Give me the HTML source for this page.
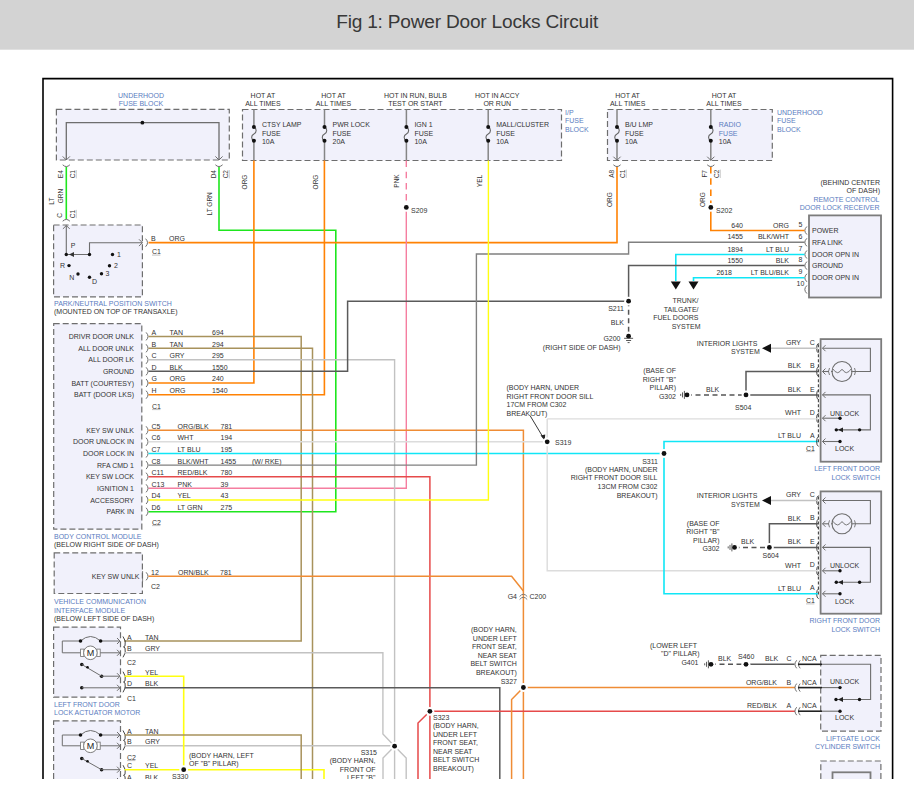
<!DOCTYPE html>
<html><head><meta charset="utf-8"><style>
html,body{margin:0;padding:0;background:#fff;width:914px;height:808px;overflow:hidden;}
svg{display:block;font-family:"Liberation Sans",sans-serif;}
</style></head><body>
<svg width="914" height="808" viewBox="0 0 914 808">
<rect x="0" y="0" width="914" height="49.7" fill="#d3d3d3"/>
<text x="336.2" y="28" text-anchor="start" fill="#383838" font-size="19.1" letter-spacing="-0.21">Fig 1: Power Door Locks Circuit</text>
<path d="M43,779 V78.6 H892.6 V779" fill="none" stroke="#000" stroke-width="1.6" />
<text x="141" y="98.4" text-anchor="middle" fill="#5a7cc0" font-size="7" >UNDERHOOD</text>
<text x="141" y="106.1" text-anchor="middle" fill="#5a7cc0" font-size="7" >FUSE BLOCK</text>
<rect x="56.4" y="109.4" width="172.9" height="50.599999999999994" fill="#f1f1fb" stroke="#6e6e6e" stroke-width="1.2" stroke-dasharray="6,3"/>
<path d="M66.3,160 V122.7 H219 V160" fill="none" stroke="#6e6e6e" stroke-width="1.3" />
<circle cx="142.4" cy="122.7" r="1.9" fill="#111"/>
<path d="M62.699999999999996,156.4 L66.3,160 L69.89999999999999,156.4" fill="none" stroke="#6e6e6e" stroke-width="1.0" />
<path d="M215.4,156.4 L219,160 L222.6,156.4" fill="none" stroke="#6e6e6e" stroke-width="1.0" />
<path d="M62.699999999999996,164.8 Q66.3,168.32 69.89999999999999,164.8" fill="none" stroke="#6e6e6e" stroke-width="1.0" />
<path d="M215.4,164.8 Q219,168.32 222.6,164.8" fill="none" stroke="#6e6e6e" stroke-width="1.0" />
<text transform="translate(63,174.2) rotate(-90)" text-anchor="middle" fill="#333333" font-size="6.5" >E4</text>
<text transform="translate(75,174.2) rotate(-90)" text-anchor="middle" fill="#333333" font-size="6.5" >C1</text>
<line x1="76.3" y1="170.0" x2="76.3" y2="178.39999999999998" stroke="#aaa" stroke-width="0.6" />
<text transform="translate(216,174.2) rotate(-90)" text-anchor="middle" fill="#333333" font-size="6.5" >D4</text>
<text transform="translate(228,174.2) rotate(-90)" text-anchor="middle" fill="#333333" font-size="6.5" >C2</text>
<line x1="229.3" y1="170.0" x2="229.3" y2="178.39999999999998" stroke="#aaa" stroke-width="0.6" />
<text transform="translate(53.8,201.2) rotate(-90)" text-anchor="middle" fill="#333333" font-size="6.5" >LT</text>
<text transform="translate(62.8,196) rotate(-90)" text-anchor="middle" fill="#333333" font-size="6.5" >GRN</text>
<text transform="translate(212,203.8) rotate(-90)" text-anchor="middle" fill="#333333" font-size="6.5" >LT GRN</text>
<text transform="translate(62,215.5) rotate(-90)" text-anchor="middle" fill="#333333" font-size="6.5" >C</text>
<text transform="translate(75,214) rotate(-90)" text-anchor="middle" fill="#333333" font-size="6.5" >C1</text>
<line x1="76.3" y1="209.8" x2="76.3" y2="218.2" stroke="#aaa" stroke-width="0.6" />
<path d="M66.3,167 V219" fill="none" stroke="#1ee61e" stroke-width="1.6" />
<path d="M219,167 V230.3 H335.8 V511.8 H148.5" fill="none" stroke="#1ee61e" stroke-width="1.6" />
<path d="M62.699999999999996,221.2 Q66.3,217.68 69.89999999999999,221.2" fill="none" stroke="#6e6e6e" stroke-width="1.0" />
<rect x="53.6" y="225" width="88.80000000000001" height="71.80000000000001" fill="#f1f1fb" stroke="#6e6e6e" stroke-width="1.2" stroke-dasharray="6,3"/>
<path d="M62.9,228.9 L66.3,225.5 L69.7,228.9" fill="none" stroke="#6e6e6e" stroke-width="1.0" />
<path d="M66.3,225.5 V254.5 H89.5 V242.7 H142.4" fill="none" stroke="#6e6e6e" stroke-width="1.1" />
<path d="M139.0,239.29999999999998 L142.4,242.7 L139.0,246.1" fill="none" stroke="#6e6e6e" stroke-width="1.0" />
<path d="M69,254.5 L74,252 L74,257 Z" fill="#333"/>
<path d="M145.6,238.7 Q149.44,242.7 145.6,246.7" fill="none" stroke="#6e6e6e" stroke-width="1.0" />
<circle cx="66.3" cy="254.5" r="1.7" fill="#111"/>
<circle cx="89.5" cy="254.5" r="1.7" fill="#111"/>
<circle cx="112.5" cy="254.5" r="1.7" fill="#111"/>
<circle cx="109.5" cy="265.7" r="1.7" fill="#111"/>
<circle cx="101.5" cy="273.8" r="1.7" fill="#111"/>
<circle cx="89.5" cy="277.2" r="1.7" fill="#111"/>
<circle cx="78" cy="274" r="1.7" fill="#111"/>
<circle cx="69" cy="265.6" r="1.7" fill="#111"/>
<text x="70.8" y="248" text-anchor="start" fill="#333333" font-size="7" >P</text>
<text x="117" y="257" text-anchor="start" fill="#333333" font-size="7" >1</text>
<text x="114" y="268" text-anchor="start" fill="#333333" font-size="7" >2</text>
<text x="105.5" y="276" text-anchor="start" fill="#333333" font-size="7" >3</text>
<text x="92" y="284.3" text-anchor="start" fill="#333333" font-size="7" >D</text>
<text x="69.3" y="280" text-anchor="start" fill="#333333" font-size="7" >N</text>
<text x="60" y="268" text-anchor="start" fill="#333333" font-size="7" >R</text>
<text x="151" y="240.5" text-anchor="start" fill="#333333" font-size="7" >B</text>
<text x="169" y="240.5" text-anchor="start" fill="#333333" font-size="7" >ORG</text>
<text x="152" y="254" text-anchor="start" fill="#333333" font-size="7" >C1</text>
<line x1="152" y1="255.1" x2="160.4" y2="255.1" stroke="#999" stroke-width="0.6"/>
<text x="54" y="305.5" text-anchor="start" fill="#5a7cc0" font-size="7" >PARK/NEUTRAL POSITION SWITCH</text>
<text x="54" y="314.2" text-anchor="start" fill="#333333" font-size="7" >(MOUNTED ON TOP OF TRANSAXLE)</text>
<path d="M148.5,242.6 H617 V167" fill="none" stroke="#ff8204" stroke-width="1.6" />
<rect x="242.5" y="109.5" width="319.0" height="51.0" fill="#f1f1fb" stroke="#6e6e6e" stroke-width="1.2" stroke-dasharray="6,3"/>
<line x1="253.9" y1="109.5" x2="253.9" y2="127" stroke="#858585" stroke-width="1.5" />
<line x1="253.9" y1="140.8" x2="253.9" y2="160.5" stroke="#858585" stroke-width="1.5" />
<path d="M253.9,127 C256.9,128.5 256.9,132.4 253.9,133.9 C250.9,135.4 250.9,139.3 253.9,140.8" fill="none" stroke="#666" stroke-width="1.1" />
<circle cx="253.9" cy="127" r="2.0" fill="#111"/>
<circle cx="253.9" cy="140.8" r="2.0" fill="#111"/>
<text x="261.9" y="126.6" text-anchor="start" fill="#333333" font-size="7" >CTSY LAMP</text>
<text x="261.9" y="135.8" text-anchor="start" fill="#333333" font-size="7" >FUSE</text>
<text x="261.9" y="144" text-anchor="start" fill="#333333" font-size="7" >10A</text>
<text x="262.9" y="98.2" text-anchor="middle" fill="#333333" font-size="7" >HOT AT</text>
<text x="262.9" y="105.8" text-anchor="middle" fill="#333333" font-size="7" >ALL TIMES</text>
<line x1="324.5" y1="109.5" x2="324.5" y2="127" stroke="#858585" stroke-width="1.5" />
<line x1="324.5" y1="140.8" x2="324.5" y2="160.5" stroke="#858585" stroke-width="1.5" />
<path d="M324.5,127 C327.5,128.5 327.5,132.4 324.5,133.9 C321.5,135.4 321.5,139.3 324.5,140.8" fill="none" stroke="#666" stroke-width="1.1" />
<circle cx="324.5" cy="127" r="2.0" fill="#111"/>
<circle cx="324.5" cy="140.8" r="2.0" fill="#111"/>
<text x="332.5" y="126.6" text-anchor="start" fill="#333333" font-size="7" >PWR LOCK</text>
<text x="332.5" y="135.8" text-anchor="start" fill="#333333" font-size="7" >FUSE</text>
<text x="332.5" y="144" text-anchor="start" fill="#333333" font-size="7" >20A</text>
<text x="333.5" y="98.2" text-anchor="middle" fill="#333333" font-size="7" >HOT AT</text>
<text x="333.5" y="105.8" text-anchor="middle" fill="#333333" font-size="7" >ALL TIMES</text>
<line x1="406.4" y1="109.5" x2="406.4" y2="127" stroke="#858585" stroke-width="1.5" />
<line x1="406.4" y1="140.8" x2="406.4" y2="160.5" stroke="#858585" stroke-width="1.5" />
<path d="M406.4,127 C409.4,128.5 409.4,132.4 406.4,133.9 C403.4,135.4 403.4,139.3 406.4,140.8" fill="none" stroke="#666" stroke-width="1.1" />
<circle cx="406.4" cy="127" r="2.0" fill="#111"/>
<circle cx="406.4" cy="140.8" r="2.0" fill="#111"/>
<text x="414.4" y="126.6" text-anchor="start" fill="#333333" font-size="7" >IGN 1</text>
<text x="414.4" y="135.8" text-anchor="start" fill="#333333" font-size="7" >FUSE</text>
<text x="414.4" y="144" text-anchor="start" fill="#333333" font-size="7" >10A</text>
<text x="415.4" y="98.2" text-anchor="middle" fill="#333333" font-size="7" >HOT IN RUN, BULB</text>
<text x="415.4" y="105.8" text-anchor="middle" fill="#333333" font-size="7" >TEST OR START</text>
<line x1="488.2" y1="109.5" x2="488.2" y2="127" stroke="#858585" stroke-width="1.5" />
<line x1="488.2" y1="140.8" x2="488.2" y2="160.5" stroke="#858585" stroke-width="1.5" />
<path d="M488.2,127 C491.2,128.5 491.2,132.4 488.2,133.9 C485.2,135.4 485.2,139.3 488.2,140.8" fill="none" stroke="#666" stroke-width="1.1" />
<circle cx="488.2" cy="127" r="2.0" fill="#111"/>
<circle cx="488.2" cy="140.8" r="2.0" fill="#111"/>
<text x="496.2" y="126.6" text-anchor="start" fill="#333333" font-size="7" >MALL/CLUSTER</text>
<text x="496.2" y="135.8" text-anchor="start" fill="#333333" font-size="7" >FUSE</text>
<text x="496.2" y="144" text-anchor="start" fill="#333333" font-size="7" >10A</text>
<text x="497.2" y="98.2" text-anchor="middle" fill="#333333" font-size="7" >HOT IN ACCY</text>
<text x="497.2" y="105.8" text-anchor="middle" fill="#333333" font-size="7" >OR RUN</text>
<text x="565" y="114.5" text-anchor="start" fill="#5a7cc0" font-size="7" >I/P</text>
<text x="565" y="123.2" text-anchor="start" fill="#5a7cc0" font-size="7" >FUSE</text>
<text x="565" y="132" text-anchor="start" fill="#5a7cc0" font-size="7" >BLOCK</text>
<text transform="translate(246.5,182) rotate(-90)" text-anchor="middle" fill="#333333" font-size="6.5" >ORG</text>
<text transform="translate(317.5,182) rotate(-90)" text-anchor="middle" fill="#333333" font-size="6.5" >ORG</text>
<text transform="translate(399,181) rotate(-90)" text-anchor="middle" fill="#333333" font-size="6.5" >PNK</text>
<text transform="translate(481.5,181) rotate(-90)" text-anchor="middle" fill="#333333" font-size="6.5" >YEL</text>
<path d="M253.9,160.5 V383 H148.5" fill="none" stroke="#ff8204" stroke-width="1.6" />
<path d="M324.4,160.5 V394.7 H148.5" fill="none" stroke="#ff8204" stroke-width="1.6" />
<path d="M406.3,160.5 V207.4" fill="none" stroke="#f57ea0" stroke-width="1.4" stroke-dasharray="6.5,4.7"/>
<path d="M406.3,207.4 V488.3 H148.5" fill="none" stroke="#f57ea0" stroke-width="1.4" />
<text x="411" y="212.5" text-anchor="start" fill="#333333" font-size="7" >S209</text>
<rect x="607.5" y="109.5" width="164.79999999999995" height="51.0" fill="#f1f1fb" stroke="#6e6e6e" stroke-width="1.2" stroke-dasharray="6,3"/>
<line x1="617" y1="109.5" x2="617" y2="127" stroke="#858585" stroke-width="1.5" />
<line x1="617" y1="140.8" x2="617" y2="160.5" stroke="#858585" stroke-width="1.5" />
<path d="M617,127 C620,128.5 620,132.4 617,133.9 C614,135.4 614,139.3 617,140.8" fill="none" stroke="#666" stroke-width="1.1" />
<circle cx="617" cy="127" r="2.0" fill="#111"/>
<circle cx="617" cy="140.8" r="2.0" fill="#111"/>
<text x="625" y="126.6" text-anchor="start" fill="#333333" font-size="7" >B/U LMP</text>
<text x="625" y="135.8" text-anchor="start" fill="#333333" font-size="7" >FUSE</text>
<text x="625" y="144" text-anchor="start" fill="#333333" font-size="7" >10A</text>
<text x="627.6" y="98.2" text-anchor="middle" fill="#333333" font-size="7" >HOT AT</text>
<text x="627.6" y="105.8" text-anchor="middle" fill="#333333" font-size="7" >ALL TIMES</text>
<path d="M613.4,156.70000000000002 L617,160.3 L620.6,156.70000000000002" fill="none" stroke="#6e6e6e" stroke-width="1.0" />
<path d="M613.4,164.8 Q617,168.32 620.6,164.8" fill="none" stroke="#6e6e6e" stroke-width="1.0" />
<line x1="710.8" y1="109.5" x2="710.8" y2="127" stroke="#858585" stroke-width="1.5" />
<line x1="710.8" y1="140.8" x2="710.8" y2="160.5" stroke="#858585" stroke-width="1.5" />
<path d="M710.8,127 C713.8,128.5 713.8,132.4 710.8,133.9 C707.8,135.4 707.8,139.3 710.8,140.8" fill="none" stroke="#666" stroke-width="1.1" />
<circle cx="710.8" cy="127" r="2.0" fill="#111"/>
<circle cx="710.8" cy="140.8" r="2.0" fill="#111"/>
<text x="718.8" y="126.6" text-anchor="start" fill="#5a7cc0" font-size="7" >RADIO</text>
<text x="718.8" y="135.8" text-anchor="start" fill="#5a7cc0" font-size="7" >FUSE</text>
<text x="718.8" y="144" text-anchor="start" fill="#333333" font-size="7" >10A</text>
<text x="724" y="98.2" text-anchor="middle" fill="#333333" font-size="7" >HOT AT</text>
<text x="724" y="105.8" text-anchor="middle" fill="#333333" font-size="7" >ALL TIMES</text>
<path d="M707.1999999999999,156.70000000000002 L710.8,160.3 L714.4,156.70000000000002" fill="none" stroke="#6e6e6e" stroke-width="1.0" />
<path d="M707.1999999999999,164.8 Q710.8,168.32 714.4,164.8" fill="none" stroke="#6e6e6e" stroke-width="1.0" />
<text x="777" y="114.5" text-anchor="start" fill="#5a7cc0" font-size="7" >UNDERHOOD</text>
<text x="777" y="123.2" text-anchor="start" fill="#5a7cc0" font-size="7" >FUSE</text>
<text x="777" y="131.9" text-anchor="start" fill="#5a7cc0" font-size="7" >BLOCK</text>
<text transform="translate(613.5,173.8) rotate(-90)" text-anchor="middle" fill="#333333" font-size="6.5" >A8</text>
<text transform="translate(625,173.8) rotate(-90)" text-anchor="middle" fill="#333333" font-size="6.5" >C1</text>
<line x1="626.3" y1="169.60000000000002" x2="626.3" y2="178.0" stroke="#aaa" stroke-width="0.6" />
<text transform="translate(707.3,173.8) rotate(-90)" text-anchor="middle" fill="#333333" font-size="6.5" >F7</text>
<text transform="translate(719,173.8) rotate(-90)" text-anchor="middle" fill="#333333" font-size="6.5" >C2</text>
<line x1="720.3" y1="169.60000000000002" x2="720.3" y2="178.0" stroke="#aaa" stroke-width="0.6" />
<text transform="translate(611.5,199.7) rotate(-90)" text-anchor="middle" fill="#333333" font-size="6.5" >ORG</text>
<text transform="translate(705,199.7) rotate(-90)" text-anchor="middle" fill="#333333" font-size="6.5" >ORG</text>
<path d="M710.8,167 V207.4" fill="none" stroke="#ff8204" stroke-width="1.6" stroke-dasharray="6.5,4.7"/>
<text x="716" y="212.5" text-anchor="start" fill="#333333" font-size="7" >S202</text>
<rect x="53.7" y="323.7" width="88.10000000000001" height="205.50000000000006" fill="#f1f1fb" stroke="#6e6e6e" stroke-width="1.2" stroke-dasharray="6,3"/>
<path d="M146.1,332.4 Q149.94,336.4 146.1,340.4" fill="none" stroke="#6e6e6e" stroke-width="1.0" />
<text x="151.5" y="334.79999999999995" text-anchor="start" fill="#333333" font-size="7" >A</text>
<text x="169.5" y="334.79999999999995" text-anchor="start" fill="#333333" font-size="7" >TAN</text>
<text x="212" y="334.79999999999995" text-anchor="start" fill="#333333" font-size="7" >694</text>
<text x="134" y="339.0" text-anchor="end" fill="#333333" font-size="7" >DRIVR DOOR UNLK</text>
<path d="M146.1,344.3 Q149.94,348.3 146.1,352.3" fill="none" stroke="#6e6e6e" stroke-width="1.0" />
<text x="151.5" y="346.7" text-anchor="start" fill="#333333" font-size="7" >B</text>
<text x="169.5" y="346.7" text-anchor="start" fill="#333333" font-size="7" >TAN</text>
<text x="212" y="346.7" text-anchor="start" fill="#333333" font-size="7" >294</text>
<text x="134" y="350.90000000000003" text-anchor="end" fill="#333333" font-size="7" >ALL DOOR UNLK</text>
<path d="M146.1,355.8 Q149.94,359.8 146.1,363.8" fill="none" stroke="#6e6e6e" stroke-width="1.0" />
<text x="151.5" y="358.2" text-anchor="start" fill="#333333" font-size="7" >C</text>
<text x="169.5" y="358.2" text-anchor="start" fill="#333333" font-size="7" >GRY</text>
<text x="212" y="358.2" text-anchor="start" fill="#333333" font-size="7" >295</text>
<text x="134" y="362.40000000000003" text-anchor="end" fill="#333333" font-size="7" >ALL DOOR LK</text>
<path d="M146.1,367.3 Q149.94,371.3 146.1,375.3" fill="none" stroke="#6e6e6e" stroke-width="1.0" />
<text x="151.5" y="369.7" text-anchor="start" fill="#333333" font-size="7" >D</text>
<text x="169.5" y="369.7" text-anchor="start" fill="#333333" font-size="7" >BLK</text>
<text x="212" y="369.7" text-anchor="start" fill="#333333" font-size="7" >1550</text>
<text x="134" y="373.90000000000003" text-anchor="end" fill="#333333" font-size="7" >GROUND</text>
<path d="M146.1,379.0 Q149.94,383.0 146.1,387.0" fill="none" stroke="#6e6e6e" stroke-width="1.0" />
<text x="151.5" y="381.4" text-anchor="start" fill="#333333" font-size="7" >G</text>
<text x="169.5" y="381.4" text-anchor="start" fill="#333333" font-size="7" >ORG</text>
<text x="212" y="381.4" text-anchor="start" fill="#333333" font-size="7" >240</text>
<text x="134" y="385.6" text-anchor="end" fill="#333333" font-size="7" >BATT (COURTESY)</text>
<path d="M146.1,390.7 Q149.94,394.7 146.1,398.7" fill="none" stroke="#6e6e6e" stroke-width="1.0" />
<text x="151.5" y="393.09999999999997" text-anchor="start" fill="#333333" font-size="7" >H</text>
<text x="169.5" y="393.09999999999997" text-anchor="start" fill="#333333" font-size="7" >ORG</text>
<text x="212" y="393.09999999999997" text-anchor="start" fill="#333333" font-size="7" >1540</text>
<text x="134" y="397.3" text-anchor="end" fill="#333333" font-size="7" >BATT (DOOR LKS)</text>
<text x="152" y="408.5" text-anchor="start" fill="#333333" font-size="7" >C1</text>
<line x1="152" y1="409.6" x2="160.4" y2="409.6" stroke="#999" stroke-width="0.6"/>
<path d="M146.1,426.3 Q149.94,430.3 146.1,434.3" fill="none" stroke="#6e6e6e" stroke-width="1.0" />
<text x="151.5" y="428.7" text-anchor="start" fill="#333333" font-size="7" >C5</text>
<text x="177.5" y="428.7" text-anchor="start" fill="#333333" font-size="7" >ORG/BLK</text>
<text x="220.5" y="428.7" text-anchor="start" fill="#333333" font-size="7" >781</text>
<text x="134" y="432.90000000000003" text-anchor="end" fill="#333333" font-size="7" >KEY SW UNLK</text>
<path d="M146.1,437.8 Q149.94,441.8 146.1,445.8" fill="none" stroke="#6e6e6e" stroke-width="1.0" />
<text x="151.5" y="440.2" text-anchor="start" fill="#333333" font-size="7" >C6</text>
<text x="177.5" y="440.2" text-anchor="start" fill="#333333" font-size="7" >WHT</text>
<text x="220.5" y="440.2" text-anchor="start" fill="#333333" font-size="7" >194</text>
<text x="134" y="444.40000000000003" text-anchor="end" fill="#333333" font-size="7" >DOOR UNLOCK IN</text>
<path d="M146.1,449.5 Q149.94,453.5 146.1,457.5" fill="none" stroke="#6e6e6e" stroke-width="1.0" />
<text x="151.5" y="451.9" text-anchor="start" fill="#333333" font-size="7" >C7</text>
<text x="177.5" y="451.9" text-anchor="start" fill="#333333" font-size="7" >LT BLU</text>
<text x="220.5" y="451.9" text-anchor="start" fill="#333333" font-size="7" >195</text>
<text x="134" y="456.1" text-anchor="end" fill="#333333" font-size="7" >DOOR LOCK IN</text>
<path d="M146.1,461.1 Q149.94,465.1 146.1,469.1" fill="none" stroke="#6e6e6e" stroke-width="1.0" />
<text x="151.5" y="463.5" text-anchor="start" fill="#333333" font-size="7" >C8</text>
<text x="177.5" y="463.5" text-anchor="start" fill="#333333" font-size="7" >BLK/WHT</text>
<text x="220.5" y="463.5" text-anchor="start" fill="#333333" font-size="7" >1455</text>
<text x="134" y="467.70000000000005" text-anchor="end" fill="#333333" font-size="7" >RFA CMD 1</text>
<path d="M146.1,472.7 Q149.94,476.7 146.1,480.7" fill="none" stroke="#6e6e6e" stroke-width="1.0" />
<text x="151.5" y="475.09999999999997" text-anchor="start" fill="#333333" font-size="7" >C11</text>
<text x="177.5" y="475.09999999999997" text-anchor="start" fill="#333333" font-size="7" >RED/BLK</text>
<text x="220.5" y="475.09999999999997" text-anchor="start" fill="#333333" font-size="7" >780</text>
<text x="134" y="479.3" text-anchor="end" fill="#333333" font-size="7" >KEY SW LOCK</text>
<path d="M146.1,484.3 Q149.94,488.3 146.1,492.3" fill="none" stroke="#6e6e6e" stroke-width="1.0" />
<text x="151.5" y="486.7" text-anchor="start" fill="#333333" font-size="7" >C13</text>
<text x="177.5" y="486.7" text-anchor="start" fill="#333333" font-size="7" >PNK</text>
<text x="220.5" y="486.7" text-anchor="start" fill="#333333" font-size="7" >39</text>
<text x="134" y="490.90000000000003" text-anchor="end" fill="#333333" font-size="7" >IGNITION 1</text>
<path d="M146.1,496.0 Q149.94,500.0 146.1,504.0" fill="none" stroke="#6e6e6e" stroke-width="1.0" />
<text x="151.5" y="498.4" text-anchor="start" fill="#333333" font-size="7" >D4</text>
<text x="177.5" y="498.4" text-anchor="start" fill="#333333" font-size="7" >YEL</text>
<text x="220.5" y="498.4" text-anchor="start" fill="#333333" font-size="7" >43</text>
<text x="134" y="502.6" text-anchor="end" fill="#333333" font-size="7" >ACCESSORY</text>
<path d="M146.1,507.8 Q149.94,511.8 146.1,515.8" fill="none" stroke="#6e6e6e" stroke-width="1.0" />
<text x="151.5" y="510.2" text-anchor="start" fill="#333333" font-size="7" >D6</text>
<text x="177.5" y="510.2" text-anchor="start" fill="#333333" font-size="7" >LT GRN</text>
<text x="220.5" y="510.2" text-anchor="start" fill="#333333" font-size="7" >275</text>
<text x="134" y="514.4" text-anchor="end" fill="#333333" font-size="7" >PARK IN</text>
<text x="252" y="463.5" text-anchor="start" fill="#333333" font-size="7" >(W/ RKE)</text>
<text x="152" y="524.5" text-anchor="start" fill="#333333" font-size="7" >C2</text>
<line x1="152" y1="525.6" x2="160.4" y2="525.6" stroke="#999" stroke-width="0.6"/>
<text x="54" y="539" text-anchor="start" fill="#5a7cc0" font-size="7" >BODY CONTROL MODULE</text>
<text x="54" y="547.2" text-anchor="start" fill="#333333" font-size="7" >(BELOW RIGHT SIDE OF DASH)</text>
<path d="M148.5,336.4 H301.2 V641 H124" fill="none" stroke="#a8925c" stroke-width="1.5" />
<path d="M148.5,348.3 H312.5 V779" fill="none" stroke="#a8925c" stroke-width="1.5" />
<path d="M148.5,359.8 H394.6 V779" fill="none" stroke="#c2c2c2" stroke-width="1.4" />
<path d="M148.5,371.3 H347.6 V301.2 H628.6" fill="none" stroke="#5a5a5a" stroke-width="1.5" />
<path d="M148.5,430.3 H523.4 V779" fill="none" stroke="#ef8c35" stroke-width="1.5" />
<path d="M148.5,441.8 H547.2" fill="none" stroke="#dcdcdc" stroke-width="1.4" />
<path d="M148.5,453.5 H664 V441.5 H818" fill="none" stroke="#10e6f6" stroke-width="1.6" />
<path d="M148.5,465.1 H476.4 V254 H628.6 V242.3 H804.5" fill="none" stroke="#808080" stroke-width="1.4" />
<path d="M148.5,476.7 H429.9 V779" fill="none" stroke="#e64a4a" stroke-width="1.5" />
<text x="880" y="184.8" text-anchor="end" fill="#333333" font-size="7" >(BEHIND CENTER</text>
<text x="880" y="192.9" text-anchor="end" fill="#333333" font-size="7" >OF DASH)</text>
<text x="879.5" y="201.5" text-anchor="end" fill="#5a7cc0" font-size="7" >REMOTE CONTROL</text>
<text x="879.5" y="209.5" text-anchor="end" fill="#5a7cc0" font-size="7" >DOOR LOCK RECEIVER</text>
<rect x="809" y="215.4" width="72" height="82.1" fill="#f1f1fb" stroke="#7c7c7c" stroke-width="1.8"/>
<path d="M806.9,226.5 Q802.74,230.5 806.9,234.5" fill="none" stroke="#6e6e6e" stroke-width="1.0" />
<text x="800.5" y="226.7" text-anchor="middle" fill="#333333" font-size="7" >5</text>
<text x="812" y="233.1" text-anchor="start" fill="#333333" font-size="7" >POWER</text>
<text x="743" y="227.6" text-anchor="end" fill="#333333" font-size="7" >640</text>
<text x="789" y="227.6" text-anchor="end" fill="#333333" font-size="7" >ORG</text>
<path d="M806.9,238.3 Q802.74,242.3 806.9,246.3" fill="none" stroke="#6e6e6e" stroke-width="1.0" />
<text x="800.5" y="238.5" text-anchor="middle" fill="#333333" font-size="7" >6</text>
<text x="812" y="244.9" text-anchor="start" fill="#333333" font-size="7" >RFA LINK</text>
<text x="743" y="239.4" text-anchor="end" fill="#333333" font-size="7" >1455</text>
<text x="789" y="239.4" text-anchor="end" fill="#333333" font-size="7" >BLK/WHT</text>
<path d="M806.9,250.5 Q802.74,254.5 806.9,258.5" fill="none" stroke="#6e6e6e" stroke-width="1.0" />
<text x="800.5" y="250.7" text-anchor="middle" fill="#333333" font-size="7" >7</text>
<text x="812" y="257.1" text-anchor="start" fill="#333333" font-size="7" >DOOR OPN IN</text>
<text x="743" y="251.6" text-anchor="end" fill="#333333" font-size="7" >1894</text>
<text x="789" y="251.6" text-anchor="end" fill="#333333" font-size="7" >LT BLU</text>
<path d="M806.9,261.6 Q802.74,265.6 806.9,269.6" fill="none" stroke="#6e6e6e" stroke-width="1.0" />
<text x="800.5" y="261.8" text-anchor="middle" fill="#333333" font-size="7" >8</text>
<text x="812" y="268.20000000000005" text-anchor="start" fill="#333333" font-size="7" >GROUND</text>
<text x="743" y="262.70000000000005" text-anchor="end" fill="#333333" font-size="7" >1550</text>
<text x="789" y="262.70000000000005" text-anchor="end" fill="#333333" font-size="7" >BLK</text>
<path d="M806.9,273.8 Q802.74,277.8 806.9,281.8" fill="none" stroke="#6e6e6e" stroke-width="1.0" />
<text x="800.5" y="274.0" text-anchor="middle" fill="#333333" font-size="7" >9</text>
<text x="812" y="280.40000000000003" text-anchor="start" fill="#333333" font-size="7" >DOOR OPN IN</text>
<text x="732" y="274.90000000000003" text-anchor="end" fill="#333333" font-size="7" >2618</text>
<text x="789" y="274.90000000000003" text-anchor="end" fill="#333333" font-size="7" >LT BLU/BLK</text>
<path d="M806.9,285.5 Q802.74,289.5 806.9,293.5" fill="none" stroke="#6e6e6e" stroke-width="1.0" />
<text x="800.5" y="285.7" text-anchor="middle" fill="#333333" font-size="7" >10</text>
<path d="M710.8,207.4 V230.5 H804.5" fill="none" stroke="#ff8204" stroke-width="1.6" />
<path d="M804.5,254.5 H675.8 V281" fill="none" stroke="#10e6f6" stroke-width="1.6" />
<path d="M804.5,277.8 H693.5 V281" fill="none" stroke="#10e6f6" stroke-width="1.6" />
<path d="M670.8,281.5 H680.8 L675.8,289.5 Z" fill="#111"/>
<path d="M688.5,281.5 H698.5 L693.5,289.5 Z" fill="#111"/>
<path d="M804.5,265.6 H628.6 V301.2" fill="none" stroke="#5a5a5a" stroke-width="1.5" />
<text x="698.5" y="302.8" text-anchor="end" fill="#333333" font-size="7" >TRUNK/</text>
<text x="698.5" y="311.5" text-anchor="end" fill="#333333" font-size="7" >TAILGATE/</text>
<text x="698.5" y="320.2" text-anchor="end" fill="#333333" font-size="7" >FUEL DOORS</text>
<text x="700.5" y="329" text-anchor="end" fill="#333333" font-size="7" >SYSTEM</text>
<path d="M628.6,301.2 V336" fill="none" stroke="#555" stroke-width="1.5" stroke-dasharray="5,3.5"/>
<text x="624" y="311" text-anchor="end" fill="#333333" font-size="7" >S211</text>
<text x="624" y="325" text-anchor="end" fill="#333333" font-size="7" >BLK</text>
<text x="620.5" y="341" text-anchor="end" fill="#333333" font-size="7" >G200</text>
<text x="620.5" y="349.5" text-anchor="end" fill="#333333" font-size="7" >(RIGHT SIDE OF DASH)</text>
<rect x="820.6" y="339.1" width="60.60000000000002" height="122.59999999999997" fill="#f1f1fb" stroke="#7c7c7c" stroke-width="1.8"/>
<line x1="818.4" y1="344.2" x2="818.4" y2="442.5" stroke="#444" stroke-width="1.1" stroke-dasharray="3,2"/>
<path d="M818.6,343.2 Q816.6,344.2 816.6,348.2 Q816.6,352.2 818.6,353.2" fill="none" stroke="#333" stroke-width="0.9" />
<path d="M825.5,345.2 L822.5,348.2 L825.5,351.2" fill="none" stroke="#6e6e6e" stroke-width="1.0" />
<path d="M818.6,366.5 Q816.6,367.5 816.6,371.5 Q816.6,375.5 818.6,376.5" fill="none" stroke="#333" stroke-width="0.9" />
<path d="M825.5,368.5 L822.5,371.5 L825.5,374.5" fill="none" stroke="#6e6e6e" stroke-width="1.0" />
<path d="M818.6,389.9 Q816.6,390.9 816.6,394.9 Q816.6,398.9 818.6,399.9" fill="none" stroke="#333" stroke-width="0.9" />
<path d="M825.5,391.9 L822.5,394.9 L825.5,397.9" fill="none" stroke="#6e6e6e" stroke-width="1.0" />
<path d="M818.6,413.2 Q816.6,414.2 816.6,418.2 Q816.6,422.2 818.6,423.2" fill="none" stroke="#333" stroke-width="0.9" />
<path d="M825.5,415.2 L822.5,418.2 L825.5,421.2" fill="none" stroke="#6e6e6e" stroke-width="1.0" />
<path d="M818.6,436.5 Q816.6,437.5 816.6,441.5 Q816.6,445.5 818.6,446.5" fill="none" stroke="#333" stroke-width="0.9" />
<path d="M825.5,438.5 L822.5,441.5 L825.5,444.5" fill="none" stroke="#6e6e6e" stroke-width="1.0" />
<path d="M822.5,348.2 H870.4 V371.5 H853" fill="none" stroke="#6e6e6e" stroke-width="1.1" />
<path d="M822.5,371.5 H829" fill="none" stroke="#6e6e6e" stroke-width="1.1" />
<circle cx="842" cy="371.5" r="10" fill="none" stroke="#6e6e6e" stroke-width="1.1"/>
<path d="M829.5,368.0 Q827.5,371.5 829.5,375.0 M854.5,368.0 Q856.5,371.5 854.5,375.0" fill="none" stroke="#6e6e6e" stroke-width="0.9" />
<path d="M833,369.0 L835,371.5 Q838,374.0 840,371.5 Q842,367.5 844,371.5 Q846,374.0 849,371.5 L851,369.0" fill="none" stroke="#6e6e6e" stroke-width="0.9" />
<path d="M831,371.5 H833 M851,371.5 H853" fill="none" stroke="#6e6e6e" stroke-width="0.9" />
<path d="M822.5,394.9 H870.4 V429.85 H836.3" fill="none" stroke="#6e6e6e" stroke-width="1.1" />
<path d="M838,429.85 L843,427.45000000000005 L843,432.25 Z" fill="#222"/>
<circle cx="836.3" cy="429.85" r="1.7" fill="#111"/>
<circle cx="859.6" cy="429.85" r="1.7" fill="#111"/>
<path d="M822.5,418.2 H840" fill="none" stroke="#6e6e6e" stroke-width="1.1" />
<circle cx="840" cy="418.2" r="1.7" fill="#111"/>
<path d="M822.5,441.5 H840" fill="none" stroke="#6e6e6e" stroke-width="1.1" />
<circle cx="840" cy="441.5" r="1.7" fill="#111"/>
<text x="830" y="415.8" text-anchor="start" fill="#333333" font-size="7" >UNLOCK</text>
<text x="835" y="451.3" text-anchor="start" fill="#333333" font-size="7" >LOCK</text>
<text x="812.3" y="344.8" text-anchor="middle" fill="#333333" font-size="7" >C</text>
<text x="801" y="345.0" text-anchor="end" fill="#333333" font-size="7" >GRY</text>
<text x="812.3" y="368.1" text-anchor="middle" fill="#333333" font-size="7" >B</text>
<text x="801" y="368.3" text-anchor="end" fill="#333333" font-size="7" >BLK</text>
<text x="812.3" y="391.5" text-anchor="middle" fill="#333333" font-size="7" >E</text>
<text x="801" y="391.7" text-anchor="end" fill="#333333" font-size="7" >BLK</text>
<text x="812.3" y="414.8" text-anchor="middle" fill="#333333" font-size="7" >D</text>
<text x="801" y="415.0" text-anchor="end" fill="#333333" font-size="7" >WHT</text>
<text x="812.3" y="438.1" text-anchor="middle" fill="#333333" font-size="7" >A</text>
<text x="801" y="438.3" text-anchor="end" fill="#333333" font-size="7" >LT BLU</text>
<text x="806" y="450.5" text-anchor="start" fill="#333333" font-size="7" >C1</text>
<line x1="806" y1="451.6" x2="814.4" y2="451.6" stroke="#999" stroke-width="0.6"/>
<text x="880" y="471.2" text-anchor="end" fill="#5a7cc0" font-size="7" >LEFT FRONT DOOR</text>
<text x="880" y="479.9" text-anchor="end" fill="#5a7cc0" font-size="7" >LOCK SWITCH</text>
<text x="757.5" y="345.59999999999997" text-anchor="end" fill="#333333" font-size="7" >INTERIOR LIGHTS</text>
<text x="759.8" y="354.4" text-anchor="end" fill="#333333" font-size="7" >SYSTEM</text>
<path d="M762,348.2 L771,343.7 L771,352.7 Z" fill="#111"/>
<path d="M771,348.2 H818" fill="none" stroke="#c2c2c2" stroke-width="1.4" />
<path d="M746,394.9 V371.5 H818" fill="none" stroke="#5a5a5a" stroke-width="1.5" />
<path d="M746,394.9 H818" fill="none" stroke="#5a5a5a" stroke-width="1.5" />
<path d="M687,394.9 H746" fill="none" stroke="#555" stroke-width="1.5" stroke-dasharray="5,3.5"/>
<text x="676" y="373.4" text-anchor="end" fill="#333333" font-size="7" >(BASE OF</text>
<text x="676" y="381.9" text-anchor="end" fill="#333333" font-size="7" >RIGHT &quot;B&quot;</text>
<text x="676" y="390.4" text-anchor="end" fill="#333333" font-size="7" >PILLAR)</text>
<text x="676" y="398.9" text-anchor="end" fill="#333333" font-size="7" >G302</text>
<text x="706" y="391.5" text-anchor="start" fill="#333333" font-size="7" >BLK</text>
<text x="735" y="409.5" text-anchor="start" fill="#333333" font-size="7" >S504</text>
<rect x="820.6" y="491.4" width="60.60000000000002" height="122.30000000000007" fill="#f1f1fb" stroke="#7c7c7c" stroke-width="1.8"/>
<line x1="818.4" y1="496.5" x2="818.4" y2="594.8" stroke="#444" stroke-width="1.1" stroke-dasharray="3,2"/>
<path d="M818.6,495.5 Q816.6,496.5 816.6,500.5 Q816.6,504.5 818.6,505.5" fill="none" stroke="#333" stroke-width="0.9" />
<path d="M825.5,497.5 L822.5,500.5 L825.5,503.5" fill="none" stroke="#6e6e6e" stroke-width="1.0" />
<path d="M818.6,518.8 Q816.6,519.8 816.6,523.8 Q816.6,527.8 818.6,528.8" fill="none" stroke="#333" stroke-width="0.9" />
<path d="M825.5,520.8 L822.5,523.8 L825.5,526.8" fill="none" stroke="#6e6e6e" stroke-width="1.0" />
<path d="M818.6,542.4 Q816.6,543.4 816.6,547.4 Q816.6,551.4 818.6,552.4" fill="none" stroke="#333" stroke-width="0.9" />
<path d="M825.5,544.4 L822.5,547.4 L825.5,550.4" fill="none" stroke="#6e6e6e" stroke-width="1.0" />
<path d="M818.6,565.8 Q816.6,566.8 816.6,570.8 Q816.6,574.8 818.6,575.8" fill="none" stroke="#333" stroke-width="0.9" />
<path d="M825.5,567.8 L822.5,570.8 L825.5,573.8" fill="none" stroke="#6e6e6e" stroke-width="1.0" />
<path d="M818.6,588.8 Q816.6,589.8 816.6,593.8 Q816.6,597.8 818.6,598.8" fill="none" stroke="#333" stroke-width="0.9" />
<path d="M825.5,590.8 L822.5,593.8 L825.5,596.8" fill="none" stroke="#6e6e6e" stroke-width="1.0" />
<path d="M822.5,500.5 H870.4 V523.8 H853" fill="none" stroke="#6e6e6e" stroke-width="1.1" />
<path d="M822.5,523.8 H829" fill="none" stroke="#6e6e6e" stroke-width="1.1" />
<circle cx="842" cy="523.8" r="10" fill="none" stroke="#6e6e6e" stroke-width="1.1"/>
<path d="M829.5,520.3 Q827.5,523.8 829.5,527.3 M854.5,520.3 Q856.5,523.8 854.5,527.3" fill="none" stroke="#6e6e6e" stroke-width="0.9" />
<path d="M833,521.3 L835,523.8 Q838,526.3 840,523.8 Q842,519.8 844,523.8 Q846,526.3 849,523.8 L851,521.3" fill="none" stroke="#6e6e6e" stroke-width="0.9" />
<path d="M831,523.8 H833 M851,523.8 H853" fill="none" stroke="#6e6e6e" stroke-width="0.9" />
<path d="M822.5,547.4 H870.4 V582.3 H836.3" fill="none" stroke="#6e6e6e" stroke-width="1.1" />
<path d="M838,582.3 L843,579.9 L843,584.6999999999999 Z" fill="#222"/>
<circle cx="836.3" cy="582.3" r="1.7" fill="#111"/>
<circle cx="859.6" cy="582.3" r="1.7" fill="#111"/>
<path d="M822.5,570.8 H840" fill="none" stroke="#6e6e6e" stroke-width="1.1" />
<circle cx="840" cy="570.8" r="1.7" fill="#111"/>
<path d="M822.5,593.8 H840" fill="none" stroke="#6e6e6e" stroke-width="1.1" />
<circle cx="840" cy="593.8" r="1.7" fill="#111"/>
<text x="830" y="568.4" text-anchor="start" fill="#333333" font-size="7" >UNLOCK</text>
<text x="835" y="603.5999999999999" text-anchor="start" fill="#333333" font-size="7" >LOCK</text>
<text x="812.3" y="497.1" text-anchor="middle" fill="#333333" font-size="7" >C</text>
<text x="801" y="497.3" text-anchor="end" fill="#333333" font-size="7" >GRY</text>
<text x="812.3" y="520.4" text-anchor="middle" fill="#333333" font-size="7" >B</text>
<text x="801" y="520.5999999999999" text-anchor="end" fill="#333333" font-size="7" >BLK</text>
<text x="812.3" y="544.0" text-anchor="middle" fill="#333333" font-size="7" >E</text>
<text x="801" y="544.1999999999999" text-anchor="end" fill="#333333" font-size="7" >BLK</text>
<text x="812.3" y="567.4" text-anchor="middle" fill="#333333" font-size="7" >D</text>
<text x="801" y="567.5999999999999" text-anchor="end" fill="#333333" font-size="7" >WHT</text>
<text x="812.3" y="590.4" text-anchor="middle" fill="#333333" font-size="7" >A</text>
<text x="801" y="590.5999999999999" text-anchor="end" fill="#333333" font-size="7" >LT BLU</text>
<text x="806" y="602.8" text-anchor="start" fill="#333333" font-size="7" >C1</text>
<line x1="806" y1="603.9" x2="814.4" y2="603.9" stroke="#999" stroke-width="0.6"/>
<text x="880" y="623.2" text-anchor="end" fill="#5a7cc0" font-size="7" >RIGHT FRONT DOOR</text>
<text x="880" y="631.9" text-anchor="end" fill="#5a7cc0" font-size="7" >LOCK SWITCH</text>
<text x="757.5" y="497.9" text-anchor="end" fill="#333333" font-size="7" >INTERIOR LIGHTS</text>
<text x="759.8" y="506.7" text-anchor="end" fill="#333333" font-size="7" >SYSTEM</text>
<path d="M762,500.5 L771,496.0 L771,505.0 Z" fill="#111"/>
<path d="M771,500.5 H818" fill="none" stroke="#c2c2c2" stroke-width="1.4" />
<path d="M769.4,547.4 V523.8 H818" fill="none" stroke="#5a5a5a" stroke-width="1.5" />
<path d="M769.4,547.4 H818" fill="none" stroke="#5a5a5a" stroke-width="1.5" />
<path d="M734.5,547.4 H769.4" fill="none" stroke="#555" stroke-width="1.5" stroke-dasharray="5,3.5"/>
<text x="719.5" y="525.9" text-anchor="end" fill="#333333" font-size="7" >(BASE OF</text>
<text x="719.5" y="534.4" text-anchor="end" fill="#333333" font-size="7" >RIGHT &quot;B&quot;</text>
<text x="719.5" y="542.9" text-anchor="end" fill="#333333" font-size="7" >PILLAR)</text>
<text x="719.5" y="551.4" text-anchor="end" fill="#333333" font-size="7" >G302</text>
<text x="741" y="544" text-anchor="start" fill="#333333" font-size="7" >BLK</text>
<text x="762.5" y="557.5" text-anchor="start" fill="#333333" font-size="7" >S604</text>
<path d="M547.2,418.9 V570.8 H818" fill="none" stroke="#dcdcdc" stroke-width="1.4" />
<path d="M547.2,418.9 H818" fill="none" stroke="#dcdcdc" stroke-width="1.4" />
<text x="555" y="444.5" text-anchor="start" fill="#333333" font-size="7" >S319</text>
<text x="506.5" y="390.0" text-anchor="start" fill="#333333" font-size="7" >(BODY HARN, UNDER</text>
<text x="506.5" y="398.6" text-anchor="start" fill="#333333" font-size="7" >RIGHT FRONT DOOR SILL</text>
<text x="506.5" y="407.2" text-anchor="start" fill="#333333" font-size="7" >17CM FROM C302</text>
<text x="506.5" y="415.8" text-anchor="start" fill="#333333" font-size="7" >BREAKOUT)</text>
<path d="M530,415.5 L543.5,438" fill="none" stroke="#222" stroke-width="0.9" />
<path d="M544.8,440.5 L540.5,435.5 L545.2,434.5 Z" fill="#222"/>
<path d="M664,453.5 V593.8 H818" fill="none" stroke="#10e6f6" stroke-width="1.6" />
<text x="658" y="463.5" text-anchor="end" fill="#333333" font-size="7" >S311</text>
<text x="657.5" y="471.8" text-anchor="end" fill="#333333" font-size="7" >(BODY HARN, UNDER</text>
<text x="657.5" y="480.4" text-anchor="end" fill="#333333" font-size="7" >RIGHT FRONT DOOR SILL</text>
<text x="657.5" y="489.0" text-anchor="end" fill="#333333" font-size="7" >13CM FROM C302</text>
<text x="657.5" y="497.6" text-anchor="end" fill="#333333" font-size="7" >BREAKOUT)</text>
<rect x="54.2" y="552.8" width="88.2" height="40.700000000000045" fill="#f1f1fb" stroke="#6e6e6e" stroke-width="1.2" stroke-dasharray="6,3"/>
<text x="139.5" y="579" text-anchor="end" fill="#333333" font-size="7" >KEY SW UNLK</text>
<path d="M146.1,572.3 Q149.94,576.3 146.1,580.3" fill="none" stroke="#6e6e6e" stroke-width="1.0" />
<line x1="142.6" y1="571" x2="142.6" y2="582" stroke="#666" stroke-width="0.8" />
<text x="151" y="574.7" text-anchor="start" fill="#333333" font-size="7" >12</text>
<text x="178" y="574.7" text-anchor="start" fill="#333333" font-size="7" >ORN/BLK</text>
<text x="220" y="574.7" text-anchor="start" fill="#333333" font-size="7" >781</text>
<text x="151" y="589.2" text-anchor="start" fill="#333333" font-size="7" >C2</text>
<text x="54" y="604.0" text-anchor="start" fill="#5a7cc0" font-size="7" >VEHICLE COMMUNICATION</text>
<text x="54" y="612.7" text-anchor="start" fill="#5a7cc0" font-size="7" >INTERFACE MODULE</text>
<text x="54" y="621" text-anchor="start" fill="#333333" font-size="7" >(BELOW LEFT SIDE OF DASH)</text>
<path d="M148.5,576.3 H511.6 L523.4,591" fill="none" stroke="#ef8c35" stroke-width="1.5" />
<path d="M519.6,596.5 Q523.4,592 527.2,596.5 M519.6,599.5 Q523.4,595 527.2,599.5" fill="none" stroke="#6e6e6e" stroke-width="0.9" />
<text x="517" y="599" text-anchor="end" fill="#333333" font-size="7" >G4</text>
<text x="529.5" y="599" text-anchor="start" fill="#333333" font-size="7" >C200</text>
<rect x="53.6" y="627.2" width="66.9" height="70.0" fill="#f1f1fb" stroke="#6e6e6e" stroke-width="1.2" stroke-dasharray="6,3"/>
<path d="M80.5,641 H62.3 V652.8 H84.4" fill="none" stroke="#6e6e6e" stroke-width="1.0" />
<path d="M80.5,641 Q90.5,632 100.6,641" fill="none" stroke="#6e6e6e" stroke-width="1.0" />
<path d="M100.6,641 H120" fill="none" stroke="#6e6e6e" stroke-width="1.0" />
<circle cx="80.5" cy="641" r="1.8" fill="#111"/>
<circle cx="100.6" cy="641" r="1.8" fill="#111"/>
<path d="M96.4,652.8 H120" fill="none" stroke="#6e6e6e" stroke-width="1.0" />
<rect x="80.6" y="649.0999999999999" width="3.4" height="7.3" fill="#fff" stroke="#6e6e6e" stroke-width="0.8"/>
<rect x="96.8" y="649.0999999999999" width="3.4" height="7.3" fill="#fff" stroke="#6e6e6e" stroke-width="0.8"/>
<circle cx="90.4" cy="652.8" r="6.8" fill="#fff" stroke="#6e6e6e" stroke-width="0.9"/>
<text x="90.4" y="656.0" text-anchor="middle" fill="#222" font-size="9" >M</text>
<path d="M117.0,638.0 L120,641 L117.0,644.0" fill="none" stroke="#6e6e6e" stroke-width="1.0" />
<path d="M117.0,649.8 L120,652.8 L117.0,655.8" fill="none" stroke="#6e6e6e" stroke-width="1.0" />
<path d="M123,636.5 Q126.5,641 125,645.9 Q122,646.9 125,647.9 Q126.5,652.8 123,657.3" fill="none" stroke="#333" stroke-width="0.9" />
<circle cx="81.8" cy="664.5" r="1.8" fill="#111"/>
<circle cx="101.6" cy="676.2" r="1.8" fill="#111"/>
<path d="M81.8,664.5 L101.6,676.2 H120" fill="none" stroke="#6e6e6e" stroke-width="1.0" />
<circle cx="87.5" cy="667.3" r="1.3" fill="#111"/>
<path d="M117.0,673.2 L120,676.2 L117.0,679.2" fill="none" stroke="#6e6e6e" stroke-width="1.0" />
<circle cx="81.8" cy="687.8" r="1.8" fill="#111"/>
<path d="M81.8,687.8 H120" fill="none" stroke="#6e6e6e" stroke-width="1.0" />
<path d="M117.0,684.8 L120,687.8 L117.0,690.8" fill="none" stroke="#6e6e6e" stroke-width="1.0" />
<path d="M123,671.7 Q126.5,676.2 125,681.0 Q122,682.0 125,683.0 Q126.5,687.8 123,692.3" fill="none" stroke="#333" stroke-width="0.9" />
<text x="127" y="639.5" text-anchor="start" fill="#333333" font-size="7" >A</text>
<text x="145" y="639.5" text-anchor="start" fill="#333333" font-size="7" >TAN</text>
<text x="127" y="651.3" text-anchor="start" fill="#333333" font-size="7" >B</text>
<text x="145" y="651.3" text-anchor="start" fill="#333333" font-size="7" >GRY</text>
<text x="127" y="674.7" text-anchor="start" fill="#333333" font-size="7" >B</text>
<text x="145" y="674.7" text-anchor="start" fill="#333333" font-size="7" >YEL</text>
<text x="127" y="686.3" text-anchor="start" fill="#333333" font-size="7" >D</text>
<text x="145" y="686.3" text-anchor="start" fill="#333333" font-size="7" >BLK</text>
<text x="127" y="664.8" text-anchor="start" fill="#333333" font-size="7" >C2</text>
<text x="127" y="700.5" text-anchor="start" fill="#333333" font-size="7" >C1</text>
<text x="54" y="706.8" text-anchor="start" fill="#5a7cc0" font-size="7" >LEFT FRONT DOOR</text>
<text x="54" y="714.8" text-anchor="start" fill="#5a7cc0" font-size="7" >LOCK ACTUATOR MOTOR</text>
<rect x="53.6" y="720.8" width="66.9" height="79.20000000000005" fill="#f1f1fb" stroke="#6e6e6e" stroke-width="1.2" stroke-dasharray="6,3"/>
<path d="M80.5,735 H62.3 V745.8 H84.4" fill="none" stroke="#6e6e6e" stroke-width="1.0" />
<path d="M80.5,735 Q90.5,726 100.6,735" fill="none" stroke="#6e6e6e" stroke-width="1.0" />
<path d="M100.6,735 H120" fill="none" stroke="#6e6e6e" stroke-width="1.0" />
<circle cx="80.5" cy="735" r="1.8" fill="#111"/>
<circle cx="100.6" cy="735" r="1.8" fill="#111"/>
<path d="M96.4,745.8 H120" fill="none" stroke="#6e6e6e" stroke-width="1.0" />
<rect x="80.6" y="742.0999999999999" width="3.4" height="7.3" fill="#fff" stroke="#6e6e6e" stroke-width="0.8"/>
<rect x="96.8" y="742.0999999999999" width="3.4" height="7.3" fill="#fff" stroke="#6e6e6e" stroke-width="0.8"/>
<circle cx="90.4" cy="745.8" r="6.8" fill="#fff" stroke="#6e6e6e" stroke-width="0.9"/>
<text x="90.4" y="749.0" text-anchor="middle" fill="#222" font-size="9" >M</text>
<path d="M117.0,732.0 L120,735 L117.0,738.0" fill="none" stroke="#6e6e6e" stroke-width="1.0" />
<path d="M117.0,742.8 L120,745.8 L117.0,748.8" fill="none" stroke="#6e6e6e" stroke-width="1.0" />
<path d="M123,730.5 Q126.5,735 125,739.4 Q122,740.4 125,741.4 Q126.5,745.8 123,750.3" fill="none" stroke="#333" stroke-width="0.9" />
<circle cx="81.8" cy="758.5" r="1.8" fill="#111"/>
<circle cx="101.6" cy="769.7" r="1.8" fill="#111"/>
<path d="M81.8,758.5 L101.6,769.7 H120" fill="none" stroke="#6e6e6e" stroke-width="1.0" />
<circle cx="87.5" cy="761.3" r="1.3" fill="#111"/>
<path d="M117.0,766.7 L120,769.7 L117.0,772.7" fill="none" stroke="#6e6e6e" stroke-width="1.0" />
<circle cx="81.8" cy="781" r="1.8" fill="#111"/>
<path d="M81.8,781 H120" fill="none" stroke="#6e6e6e" stroke-width="1.0" />
<path d="M117.0,778.0 L120,781 L117.0,784.0" fill="none" stroke="#6e6e6e" stroke-width="1.0" />
<path d="M123,765.2 Q126.5,769.7 125,774.35 Q122,775.35 125,776.35 Q126.5,781 123,785.5" fill="none" stroke="#333" stroke-width="0.9" />
<text x="127" y="733.5" text-anchor="start" fill="#333333" font-size="7" >A</text>
<text x="145" y="733.5" text-anchor="start" fill="#333333" font-size="7" >TAN</text>
<text x="127" y="744.3" text-anchor="start" fill="#333333" font-size="7" >B</text>
<text x="145" y="744.3" text-anchor="start" fill="#333333" font-size="7" >GRY</text>
<text x="127" y="768.2" text-anchor="start" fill="#333333" font-size="7" >C</text>
<text x="145" y="768.2" text-anchor="start" fill="#333333" font-size="7" >YEL</text>
<text x="127" y="779.5" text-anchor="start" fill="#333333" font-size="7" >A</text>
<text x="145" y="779.5" text-anchor="start" fill="#333333" font-size="7" >BLK</text>
<text x="127" y="759.5" text-anchor="start" fill="#333333" font-size="7" >C2</text>
<line x1="127" y1="760.6" x2="135.4" y2="760.6" stroke="#999" stroke-width="0.6"/>
<path d="M124.5,652.8 H382.9 V734 L394.6,746.2" fill="none" stroke="#c2c2c2" stroke-width="1.4" />
<path d="M124.5,745.8 H394.6" fill="none" stroke="#c2c2c2" stroke-width="1.4" />
<path d="M394.6,746.2 L383,758 V779 M394.6,746.2 L406.2,758 V779" fill="none" stroke="#c2c2c2" stroke-width="1.4" />
<path d="M124.5,676.2 H183.7 V769.7" fill="none" stroke="#ffff10" stroke-width="1.6" />
<path d="M124.5,769.7 H324 V779" fill="none" stroke="#ffff10" stroke-width="1.6" />
<text x="172" y="779" text-anchor="start" fill="#333333" font-size="7" >S330</text>
<text x="189" y="757.5" text-anchor="start" fill="#333333" font-size="7" >(BODY HARN, LEFT</text>
<text x="189" y="766.1" text-anchor="start" fill="#333333" font-size="7" >OF &quot;B&quot; PILLAR)</text>
<path d="M124.5,687.8 H499.8 V779" fill="none" stroke="#5a5a5a" stroke-width="1.5" />
<path d="M124.5,735 H301.2 V779" fill="none" stroke="#a8925c" stroke-width="1.5" />
<text x="377" y="754.6" text-anchor="end" fill="#333333" font-size="7" >S315</text>
<text x="375.5" y="763.2" text-anchor="end" fill="#333333" font-size="7" >(BODY HARN,</text>
<text x="375.5" y="771.5" text-anchor="end" fill="#333333" font-size="7" >FRONT OF</text>
<text x="375.5" y="779.8" text-anchor="end" fill="#333333" font-size="7" >LEFT &quot;B&quot;</text>
<text x="375.5" y="788.1" text-anchor="end" fill="#333333" font-size="7" >PILLAR)</text>
<path d="M429.9,711.3 H795" fill="none" stroke="#e64a4a" stroke-width="1.5" />
<path d="M429.9,711.3 L418,723 V779" fill="none" stroke="#e64a4a" stroke-width="1.5" />
<text x="433" y="719.6" text-anchor="start" fill="#333333" font-size="7" >S323</text>
<text x="433" y="728.3" text-anchor="start" fill="#333333" font-size="7" >(BODY HARN,</text>
<text x="433" y="736.8" text-anchor="start" fill="#333333" font-size="7" >UNDER LEFT</text>
<text x="433" y="745.3" text-anchor="start" fill="#333333" font-size="7" >FRONT SEAT,</text>
<text x="433" y="753.8" text-anchor="start" fill="#333333" font-size="7" >NEAR SEAT</text>
<text x="433" y="762.3" text-anchor="start" fill="#333333" font-size="7" >BELT SWITCH</text>
<text x="433" y="770.8" text-anchor="start" fill="#333333" font-size="7" >BREAKOUT)</text>
<path d="M523.4,687.5 H795" fill="none" stroke="#ef8c35" stroke-width="1.5" />
<path d="M523.4,687.5 L511.6,699.5 V779" fill="none" stroke="#ef8c35" stroke-width="1.5" />
<text x="517" y="683.5" text-anchor="end" fill="#333333" font-size="7" >S327</text>
<text x="516.8" y="632.3" text-anchor="end" fill="#333333" font-size="7" >(BODY HARN,</text>
<text x="516.8" y="640.8" text-anchor="end" fill="#333333" font-size="7" >UNDER LEFT</text>
<text x="516.8" y="649.3" text-anchor="end" fill="#333333" font-size="7" >FRONT SEAT,</text>
<text x="516.8" y="657.8" text-anchor="end" fill="#333333" font-size="7" >NEAR SEAT</text>
<text x="516.8" y="666.3" text-anchor="end" fill="#333333" font-size="7" >BELT SWITCH</text>
<text x="516.8" y="674.8" text-anchor="end" fill="#333333" font-size="7" >BREAKOUT)</text>
<rect x="820.7" y="655.4" width="60.299999999999955" height="75.70000000000005" fill="#f1f1fb" stroke="#6e6e6e" stroke-width="1.2" stroke-dasharray="6,3"/>
<path d="M796.7,660.3 Q793.18,664.3 796.7,668.3" fill="none" stroke="#6e6e6e" stroke-width="1.0" />
<path d="M800.2,660.3 Q796.68,664.3 800.2,668.3" fill="none" stroke="#6e6e6e" stroke-width="1.0" />
<line x1="798" y1="664.3" x2="822" y2="664.3" stroke="#222" stroke-width="1.6" />
<text x="802" y="661.3" text-anchor="start" fill="#333333" font-size="7" >NCA</text>
<text x="786.5" y="661.3" text-anchor="start" fill="#333333" font-size="7" >C</text>
<path d="M796.7,683.6 Q793.18,687.6 796.7,691.6" fill="none" stroke="#6e6e6e" stroke-width="1.0" />
<path d="M800.2,683.6 Q796.68,687.6 800.2,691.6" fill="none" stroke="#6e6e6e" stroke-width="1.0" />
<line x1="798" y1="687.6" x2="822" y2="687.6" stroke="#222" stroke-width="1.6" />
<text x="802" y="684.6" text-anchor="start" fill="#333333" font-size="7" >NCA</text>
<text x="786.5" y="684.6" text-anchor="start" fill="#333333" font-size="7" >B</text>
<path d="M796.7,707.2 Q793.18,711.2 796.7,715.2" fill="none" stroke="#6e6e6e" stroke-width="1.0" />
<path d="M800.2,707.2 Q796.68,711.2 800.2,715.2" fill="none" stroke="#6e6e6e" stroke-width="1.0" />
<line x1="798" y1="711.2" x2="822" y2="711.2" stroke="#222" stroke-width="1.6" />
<text x="802" y="708.2" text-anchor="start" fill="#333333" font-size="7" >NCA</text>
<text x="786.5" y="708.2" text-anchor="start" fill="#333333" font-size="7" >A</text>
<text x="777" y="684.5" text-anchor="end" fill="#333333" font-size="7" >ORG/BLK</text>
<text x="777" y="708" text-anchor="end" fill="#333333" font-size="7" >RED/BLK</text>
<path d="M822,664.3 H870.6 V699.5 H836" fill="none" stroke="#6e6e6e" stroke-width="1.1" />
<path d="M838,699.5 L843,697.1 L843,701.9 Z" fill="#222"/>
<circle cx="836" cy="699.5" r="1.7" fill="#111"/>
<circle cx="859.5" cy="699.5" r="1.7" fill="#111"/>
<path d="M822,687.6 H840" fill="none" stroke="#6e6e6e" stroke-width="1.1" />
<circle cx="840" cy="687.6" r="1.7" fill="#111"/>
<path d="M822,711.2 H840" fill="none" stroke="#6e6e6e" stroke-width="1.1" />
<circle cx="840" cy="711.2" r="1.7" fill="#111"/>
<text x="830" y="684.3" text-anchor="start" fill="#333333" font-size="7" >UNLOCK</text>
<text x="835" y="719.7" text-anchor="start" fill="#333333" font-size="7" >LOCK</text>
<text x="880" y="740.5" text-anchor="end" fill="#5a7cc0" font-size="7" >LIFTGATE LOCK</text>
<text x="880" y="749.0" text-anchor="end" fill="#5a7cc0" font-size="7" >CYLINDER SWITCH</text>
<path d="M746,664.3 H794.5" fill="none" stroke="#5a5a5a" stroke-width="1.5" />
<path d="M711,664.3 H746" fill="none" stroke="#555" stroke-width="1.5" stroke-dasharray="5,3.5"/>
<text x="718" y="660.5" text-anchor="start" fill="#333333" font-size="7" >BLK</text>
<text x="738" y="658.5" text-anchor="start" fill="#333333" font-size="7" >S460</text>
<text x="765" y="660.5" text-anchor="start" fill="#333333" font-size="7" >BLK</text>
<text x="697" y="647.5" text-anchor="end" fill="#333333" font-size="7" >(LOWER LEFT</text>
<text x="699.5" y="656" text-anchor="end" fill="#333333" font-size="7" >&quot;D&quot; PILLAR)</text>
<text x="698.5" y="664.5" text-anchor="end" fill="#333333" font-size="7" >G401</text>
<rect x="820.8" y="761" width="60.10000000000002" height="39" fill="#f1f1fb" stroke="#6e6e6e" stroke-width="1.2" stroke-dasharray="6,3"/>
<rect x="832.5" y="772.3" width="38.0" height="27.700000000000045" fill="#f1f1fb" stroke="#7c7c7c" stroke-width="1.8"/>
<path d="M488.4,160.5 V500 H148.5" fill="none" stroke="#ffff10" stroke-width="1.4" />
<circle cx="406.3" cy="207.4" r="4.4" fill="#fff"/>
<circle cx="710.8" cy="207.4" r="4.4" fill="#fff"/>
<circle cx="628.6" cy="301.2" r="4.4" fill="#fff"/>
<circle cx="628.6" cy="336.2" r="4.4" fill="#fff"/>
<circle cx="746" cy="394.9" r="4.4" fill="#fff"/>
<circle cx="687" cy="394.9" r="4.4" fill="#fff"/>
<circle cx="769.4" cy="547.4" r="4.4" fill="#fff"/>
<circle cx="734.5" cy="547.4" r="4.4" fill="#fff"/>
<circle cx="547.2" cy="441.8" r="4.4" fill="#fff"/>
<circle cx="664" cy="453.5" r="4.4" fill="#fff"/>
<circle cx="394.6" cy="746.2" r="4.4" fill="#fff"/>
<circle cx="183.7" cy="769.7" r="4.4" fill="#fff"/>
<circle cx="429.9" cy="711.3" r="4.4" fill="#fff"/>
<circle cx="523.4" cy="687.5" r="4.4" fill="#fff"/>
<circle cx="746" cy="664.3" r="4.4" fill="#fff"/>
<circle cx="711" cy="664.3" r="4.4" fill="#fff"/>
<circle cx="406.3" cy="207.4" r="2.4" fill="#111"/>
<circle cx="710.8" cy="207.4" r="2.4" fill="#111"/>
<circle cx="628.6" cy="301.2" r="2.4" fill="#111"/>
<circle cx="628.6" cy="336.2" r="2.4" fill="#111"/>
<circle cx="746" cy="394.9" r="2.4" fill="#111"/>
<circle cx="687" cy="394.9" r="2.4" fill="#111"/>
<circle cx="769.4" cy="547.4" r="2.4" fill="#111"/>
<circle cx="734.5" cy="547.4" r="2.4" fill="#111"/>
<circle cx="547.2" cy="441.8" r="2.4" fill="#111"/>
<circle cx="664" cy="453.5" r="2.4" fill="#111"/>
<circle cx="394.6" cy="746.2" r="2.4" fill="#111"/>
<circle cx="183.7" cy="769.7" r="2.4" fill="#111"/>
<circle cx="429.9" cy="711.3" r="2.4" fill="#111"/>
<circle cx="523.4" cy="687.5" r="2.4" fill="#111"/>
<circle cx="746" cy="664.3" r="2.4" fill="#111"/>
<circle cx="711" cy="664.3" r="2.4" fill="#111"/>
<path d="M624.1,338.3 H633.1 M626.1,340.5 H631.1 M627.6,342.6 H629.6" stroke="#444" stroke-width="0.9" fill="none"/>
<path d="M684.4,390.9 V398.9 M682.5,392.4 V397.4 M680.7,393.9 V395.9" stroke="#333" stroke-width="0.8" fill="none"/>
<path d="M731.9,543.4 V551.4 M730.0,544.9 V549.9 M728.2,546.4 V548.4" stroke="#333" stroke-width="0.8" fill="none"/>
<path d="M708.4,660.3 V668.3 M706.5,661.8 V666.8 M704.7,663.3 V665.3" stroke="#333" stroke-width="0.8" fill="none"/>
<rect x="0" y="779" width="914" height="29" fill="#fff"/>
</svg>
</body></html>
